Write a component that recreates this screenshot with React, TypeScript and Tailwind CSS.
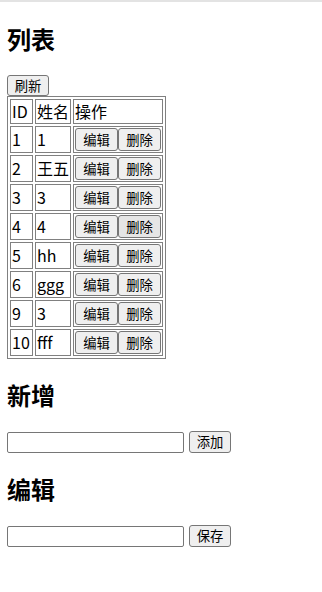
import React from "react";

const rows: [string, string][] = [
  ["1", "1"],
  ["2", "王五"],
  ["3", "3"],
  ["4", "4"],
  ["5", "hh"],
  ["6", "ggg"],
  ["9", "3"],
  ["10", "fff"],
];

const font = { fontFamily: '"Noto Sans CJK SC", "Noto Sans", sans-serif' };

function Btn({ children, w, h, hover }: { children: React.ReactNode; w: string; h: string; hover?: boolean }) {
  return (
    <button
      className={`${w} ${h} ${hover ? "bg-[#e5e5e5]" : "bg-[#efefef]"} flex items-center justify-center border border-[#767676] rounded-[3px] text-[13.33px] leading-none text-black p-0`}
    >
      {children}
    </button>
  );
}

export default function App() {
  return (
    <div className="w-[322px] min-h-[592px] bg-white text-black" style={font}>
      <div className="h-[3px] border-t-2 border-[#e3e3e3]" />
      <div className="px-[7px] pt-[20px]">
        <h2 className="text-[24px] font-bold leading-[32px] h-[32px] mb-[20px]">列表</h2>
        <Btn w="w-[42px]" h="h-[21px]">刷新</Btn>
        <table className="border border-[#808080] border-separate border-spacing-[2px] text-[16px]">
          <tbody>
            <tr className="h-[25px]">
              <td className="w-[23px] border border-[#808080] p-px leading-[21px] whitespace-nowrap">ID</td>
              <td className="w-[36px] border border-[#808080] p-px leading-[21px] whitespace-nowrap">姓名</td>
              <td className="w-[90px] border border-[#808080] p-px leading-[21px] whitespace-nowrap">操作</td>
            </tr>
            {rows.map(([id, name], i) => (
              <tr key={id} className="h-[27px]">
                <td className="border border-[#808080] p-px leading-[23px] whitespace-nowrap">{id}</td>
                <td className="border border-[#808080] p-px leading-[23px] whitespace-nowrap">{name}</td>
                <td className="border border-[#808080] p-px">
                  <div className="flex">
                    <Btn w="w-[43px]" h="h-[23px]">编辑</Btn>
                    <Btn w="w-[43px]" h="h-[23px]" hover={i === 3}>删除</Btn>
                  </div>
                </td>
              </tr>
            ))}
          </tbody>
        </table>
        <h2 className="text-[24px] font-bold leading-[32px] h-[32px] mt-[20px] mb-[20px]">新增</h2>
        <div className="flex items-center gap-[5px] h-[22px]">
          <input className="w-[177px] h-[21px] border border-[#767676] rounded-[2px] bg-white" />
          <Btn w="w-[42px]" h="h-[22px]">添加</Btn>
        </div>
        <h2 className="text-[24px] font-bold leading-[32px] h-[32px] mt-[20px] mb-[20px]">编辑</h2>
        <div className="flex items-center gap-[5px] h-[22px]">
          <input className="w-[177px] h-[21px] border border-[#767676] rounded-[2px] bg-white" />
          <Btn w="w-[42px]" h="h-[22px]">保存</Btn>
        </div>
      </div>
    </div>
  );
}
